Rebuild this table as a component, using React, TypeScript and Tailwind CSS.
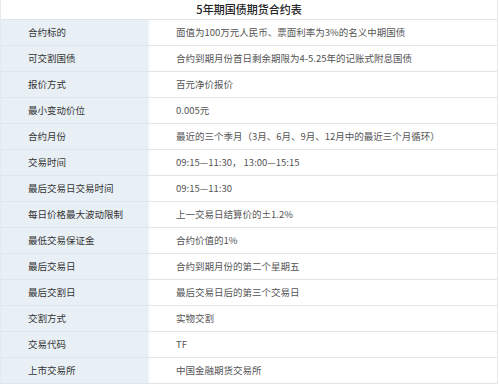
import React from "react";

const rows: [string, string][] = [
  ["合约标的", "面值为100万元人民币、票面利率为3%的名义中期国债"],
  ["可交割国债", "合约到期月份首日剩余期限为4-5.25年的记账式附息国债"],
  ["报价方式", "百元净价报价"],
  ["最小变动价位", "0.005元"],
  ["合约月份", "最近的三个季月（3月、6月、9月、12月中的最近三个月循环）"],
  ["交易时间", "09:15—11:30， 13:00—15:15"],
  ["最后交易日交易时间", "09:15—11:30"],
  ["每日价格最大波动限制", "上一交易日结算价的±1.2%"],
  ["最低交易保证金", "合约价值的1%"],
  ["最后交易日", "合约到期月份的第二个星期五"],
  ["最后交割日", "最后交易日后的第三个交易日"],
  ["交割方式", "实物交割"],
  ["交易代码", "TF"],
  ["上市交易所", "中国金融期货交易所"],
];

export default function App() {
  return (
    <div
      className="w-[500px] h-[392px] bg-white overflow-hidden"
      style={{ fontFamily: '"Noto Sans CJK SC", "Noto Sans", sans-serif' }}
    >
      <div className="w-[498px] border-r border-l border-[#e4eaee]">
        <div className="h-[20px] flex items-center justify-center border-b border-[#dfe6ea] text-[11px] font-medium text-[#222]">
          5年期国债期货合约表
        </div>
        {rows.map(([k, v]) => (
          <div key={k} className="h-[26px] flex border-b border-[#dfe6ea]">
            <div className="w-[147px] bg-[#e9f0f5] flex items-center pl-[27px] text-[9.5px] text-[#333]">
              {k}
            </div>
            <div className="w-[2px] bg-[#f6f9fb]" />
            <div className="flex-1 flex items-center pl-[26px] text-[9.5px] text-[#555] whitespace-nowrap">
              {v}
            </div>
          </div>
        ))}
      </div>
    </div>
  );
}
